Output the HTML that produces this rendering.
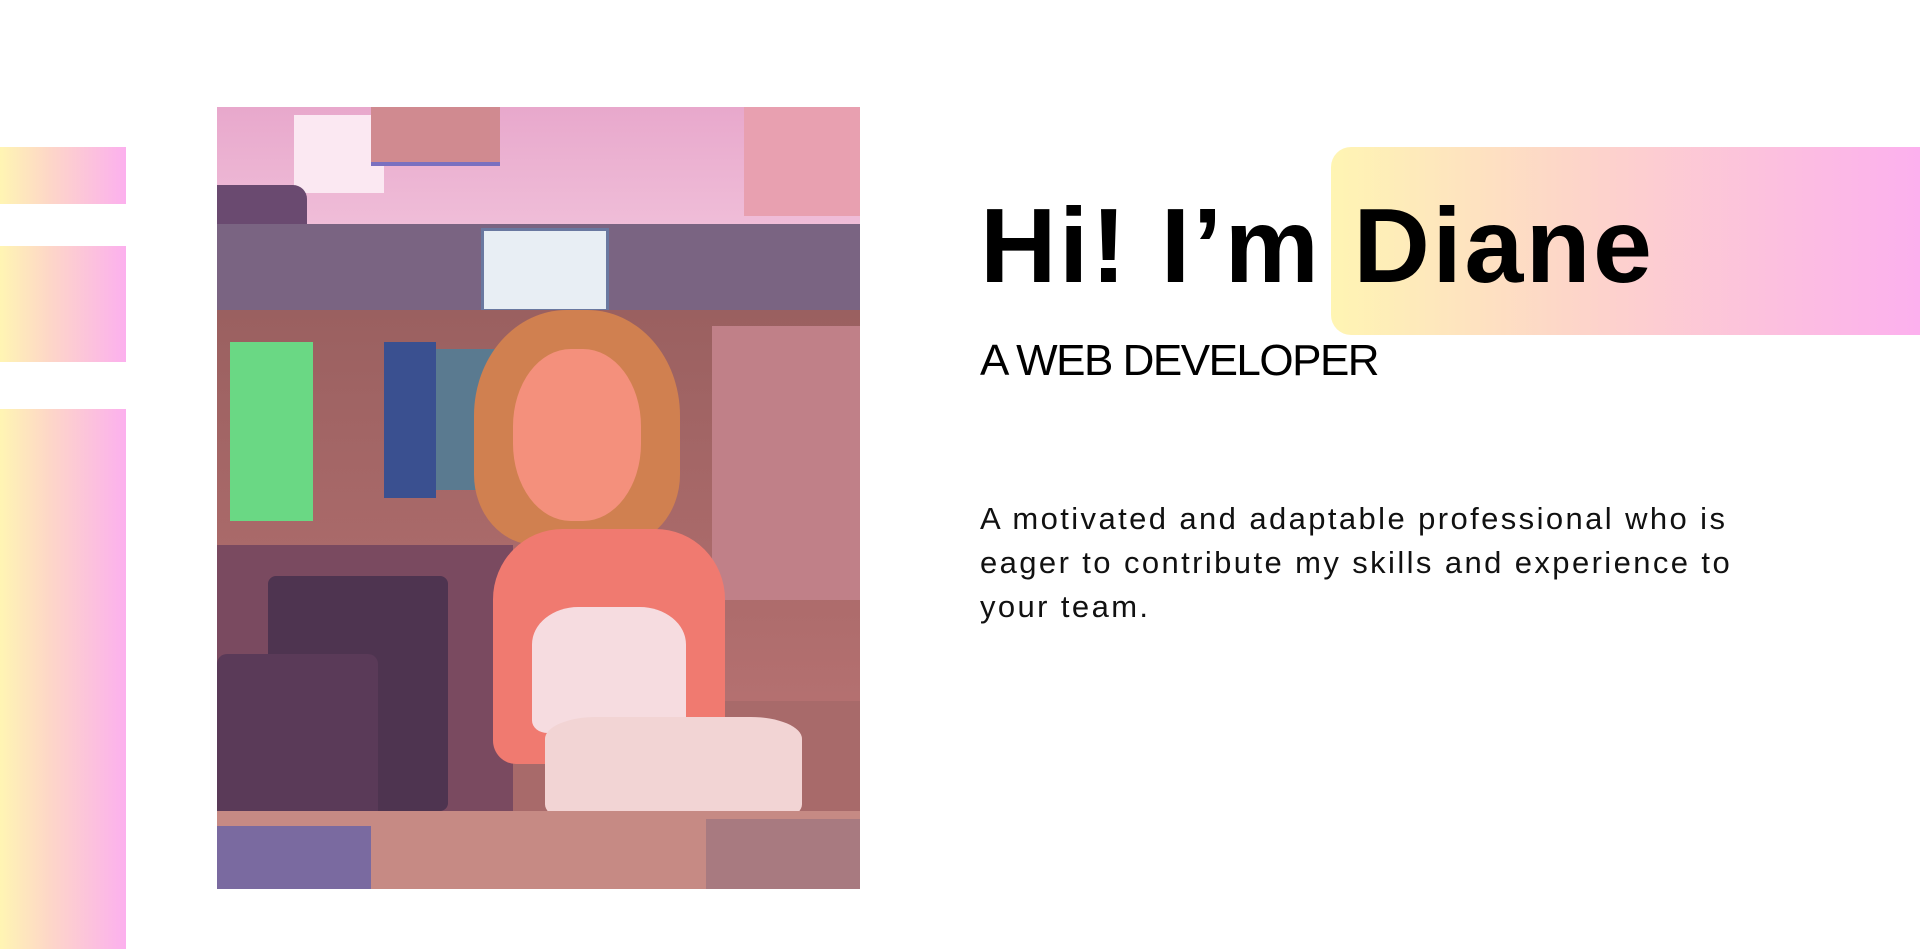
<!DOCTYPE html>
<html><head><meta charset="utf-8"><style>
html,body{margin:0;padding:0;width:1920px;height:949px;overflow:hidden;background:#fff;font-family:"Liberation Sans",sans-serif;position:relative;}
.g{background:linear-gradient(90deg,#fff5b3 0%,#fdd6c8 40%,#fcb0ee 100%);position:absolute;}
.p{position:absolute;left:217px;top:107px;width:643px;height:782px;overflow:hidden;background:#a86a6a;}
.p div{position:absolute;}
#hd{position:absolute;left:980px;top:193px;margin:0;font-size:106px;font-weight:bold;letter-spacing:2.5px;line-height:106px;height:106px;color:#000;white-space:nowrap;}
#sb{position:absolute;left:980px;top:336px;height:50px;margin:0;font-size:44px;letter-spacing:-1.5px;color:#000;line-height:50px;white-space:nowrap;}
#tx{position:absolute;left:980px;top:497px;margin:0;font-size:31px;line-height:44px;color:#111;letter-spacing:2.4px;white-space:nowrap;}
</style></head><body>
<div class="g" style="left:0;top:147px;width:126px;height:57px"></div>
<div class="g" style="left:0;top:246px;width:126px;height:116px"></div>
<div class="g" style="left:0;top:409px;width:126px;height:540px"></div>
<div class="g" style="left:1331px;top:147px;width:589px;height:188px;border-radius:20px 0 0 20px"></div>

<div class="p">
 <div style="left:0;top:0;width:100%;height:20%;background:linear-gradient(180deg,#e8a8cc,#f2c4dc)"></div>
 <div style="left:12%;top:1%;width:14%;height:10%;background:#fbe8f2"></div>
 <div style="left:24%;top:0;width:20%;height:7%;background:#d08a90;border-bottom:4px solid #7a70c0"></div>
 <div style="left:0;top:10%;width:14%;height:16%;background:#6a4a70;border-radius:0 14px 14px 0"></div>
 <div style="left:82%;top:0;width:18%;height:14%;background:#e8a0b0"></div>
 <div style="left:0;top:15%;width:100%;height:11%;background:#7a6482"></div>
 <div style="left:41%;top:15.5%;width:19%;height:10%;background:#e8eef4;border:3px solid #6a78a0"></div>
 <div style="left:0;top:26%;width:100%;height:50%;background:linear-gradient(180deg,#9a6060,#b47070)"></div>
 <div style="left:2%;top:30%;width:13%;height:23%;background:#6ad884"></div>
 <div style="left:26%;top:30%;width:8%;height:20%;background:#3a5090"></div>
 <div style="left:34%;top:31%;width:32%;height:18%;background:#5a7a90"></div>
 <div style="left:77%;top:28%;width:23%;height:35%;background:#c08088"></div>
 <div style="left:0;top:56%;width:46%;height:44%;background:#7a4a60"></div>
 <div style="left:8%;top:60%;width:28%;height:30%;background:#4e3450;border-radius:8px"></div>
 <div style="left:0;top:70%;width:25%;height:22%;background:#5a3a58;border-radius:10px"></div>
 <div style="left:40%;top:26%;width:32%;height:30%;background:#d08050;border-radius:45% 45% 30% 30%"></div>
 <div style="left:46%;top:31%;width:20%;height:22%;background:#f4907c;border-radius:45%"></div>
 <div style="left:43%;top:54%;width:36%;height:30%;background:#f07a70;border-radius:30% 30% 10% 10%"></div>
 <div style="left:49%;top:64%;width:24%;height:16%;background:#f6dce0;border-radius:30% 30% 10% 10%"></div>
 <div style="left:51%;top:78%;width:40%;height:14%;background:#f2d4d4;border-radius:20%"></div>
 <div style="left:0;top:90%;width:100%;height:10%;background:#c68a84"></div>
 <div style="left:0;top:92%;width:24%;height:8%;background:#7a6aa0"></div>
 <div style="left:76%;top:91%;width:24%;height:9%;background:#a87a80"></div>
</div>

<div id="hd">Hi! I’m Diane</div>
<div id="sb">A WEB DEVELOPER</div>
<div id="tx">A motivated and adaptable professional who is<br>eager to contribute my skills and experience to<br>your team.</div>
</body></html>
